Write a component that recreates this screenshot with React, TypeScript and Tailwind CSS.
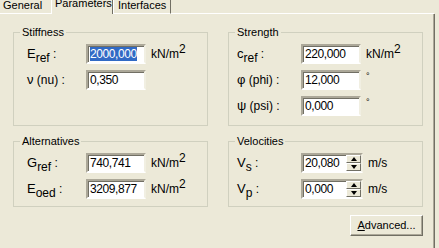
import React from 'react';

type Row = {
  main: string;
  sub?: string;
  rest?: string;
  value: string;
  unit?: 'kn' | 'deg' | 'ms';
  selected?: boolean;
  spin?: boolean;
};

const stiffness: Row[] = [
  { main: 'E', sub: 'ref', value: '2000,000', unit: 'kn', selected: true },
  { main: 'ν', rest: ' (nu)', value: '0,350' },
];

const strength: Row[] = [
  { main: 'c', sub: 'ref', value: '220,000', unit: 'kn' },
  { main: 'φ', rest: ' (phi)', value: '12,000', unit: 'deg' },
  { main: 'ψ', rest: ' (psi)', value: '0,000', unit: 'deg' },
];

const alternatives: Row[] = [
  { main: 'G', sub: 'ref', value: '740,741', unit: 'kn' },
  { main: 'E', sub: 'oed', value: '3209,877', unit: 'kn' },
];

const velocities: Row[] = [
  { main: 'V', sub: 's', value: '20,080', unit: 'ms', spin: true },
  { main: 'V', sub: 'p', value: '0,000', unit: 'ms', spin: true },
];

function Unit({ unit }: { unit?: Row['unit'] }) {
  if (unit === 'kn')
    return (
      <span className="text-[12px] leading-[14px]">
        kN/m<span className="relative -top-[5px] text-[12px]">2</span>
      </span>
    );
  if (unit === 'deg') return <span className="self-start text-[9px] leading-[10px] mt-[1px]">°</span>;
  if (unit === 'ms') return <span className="text-[12px] leading-[14px]">m/s</span>;
  return null;
}

function Spinner() {
  return (
    <div className="flex flex-col w-[15px] h-[16px] shrink-0">
      <div className="flex-1 flex items-center justify-center bg-[#ece9d8] border border-t-white border-l-white border-b-[#716f64] border-r-[#716f64]">
        <div className="w-0 h-0 border-l-[3.5px] border-r-[3.5px] border-b-[4px] border-l-transparent border-r-transparent border-b-black" />
      </div>
      <div className="flex-1 flex items-center justify-center bg-[#ece9d8] border border-t-white border-l-white border-b-[#716f64] border-r-[#716f64]">
        <div className="w-0 h-0 border-l-[3.5px] border-r-[3.5px] border-t-[4px] border-l-transparent border-r-transparent border-t-black" />
      </div>
    </div>
  );
}

function Field({ row }: { row: Row }) {
  return (
    <div
      className={`flex items-center h-[20px] ${row.spin ? 'w-[62px]' : 'w-[60px]'} bg-white border-2 border-t-[#aca899] border-l-[#aca899] border-b-white border-r-[#f1efe2] shadow-[inset_1px_1px_0_#716f64] shrink-0`}
    >
      <div className="flex-1 pl-[2px] text-[12px] leading-[14px] tracking-[-0.4px] overflow-hidden whitespace-nowrap">
        {row.selected ? (
          <span className="bg-[#316ac5] text-white">{row.value}</span>
        ) : (
          row.value
        )}
      </div>
      {row.spin && <Spinner />}
    </div>
  );
}

function Group({
  title,
  rows,
  right,
  pb,
}: {
  title: string;
  rows: Row[];
  right?: boolean;
  pb: string;
}) {
  return (
    <fieldset className={`border border-[#d0d0bf] ${pb}`}>
      <legend className="ml-[6px] px-[2px] text-[11px] leading-[13px]">{title}</legend>
      <div className={`flex flex-col gap-[6px] pt-[5px] ${right ? 'pl-[8px]' : 'pl-[13px]'}`}>
        {rows.map((row, i) => (
          <div key={i} className="flex items-center h-[20px]">
            <div className={`${right ? 'w-[64px]' : 'w-[59px]'} shrink-0 text-[12px] leading-[14px] whitespace-nowrap`}>
              <span className="text-[13px]">{row.main}</span>
              {row.sub && <span className="relative top-[4px]">{row.sub}</span>}
              {row.rest}
              {' :'}
            </div>
            <Field row={row} />
            <div className="ml-[5px] flex items-center h-[20px]">
              <Unit unit={row.unit} />
            </div>
          </div>
        ))}
      </div>
    </fieldset>
  );
}

export default function App() {
  return (
    <div className="w-[439px] h-[248px] overflow-hidden bg-[#ece9d8] text-black font-['Liberation_Sans',Arial,sans-serif] text-[11px]">
      {/* Tabs */}
      <div className="flex items-end h-[14px] w-[434px] overflow-hidden">
        <div className="w-[51px] h-[14px] border-b border-b-white pl-[3px] leading-[13px]">
          <div className="-mt-[1px]">General</div>
        </div>
        <div className="w-[62px] h-[14px] border-l border-l-white border-r border-r-[#716f64] pl-[3px] leading-[13px]">
          <div className="-mt-[3px]">Parameters</div>
        </div>
        <div className="w-[58px] h-[14px] border-l border-l-white border-r border-r-[#716f64] border-b border-b-white pl-[4px] leading-[13px]">
          <div className="-mt-[1px]">Interfaces</div>
        </div>
        <div className="flex-1 h-[14px] border-b border-b-white" />
      </div>

      {/* Panel */}
      <div className="w-[435px] h-[234px] border-r border-r-[#716f64] shadow-[inset_-1px_0_0_#aca899] pt-[12px] pl-[13px]">
        <div className="grid grid-cols-[195px_195px] gap-x-[20px] gap-y-[9px]">
          <Group title="Stiffness" rows={stiffness} pb="pb-[9px]" />
          <Group title="Strength" rows={strength} right pb="pb-[9px]" />
          <Group title="Alternatives" rows={alternatives} pb="pb-[7px]" />
          <Group title="Velocities" rows={velocities} right pb="pb-[7px]" />
        </div>
        <div className="flex justify-end w-[410px] mt-[8px]">
          <button className="w-[73px] h-[21px] bg-[#ece9d8] border border-t-white border-l-white border-b-[#716f64] border-r-[#716f64] shadow-[inset_-1px_-1px_0_#aca899] text-[11px] leading-[13px]">
            <span className="underline">A</span>dvanced...
          </button>
        </div>
      </div>
    </div>
  );
}
